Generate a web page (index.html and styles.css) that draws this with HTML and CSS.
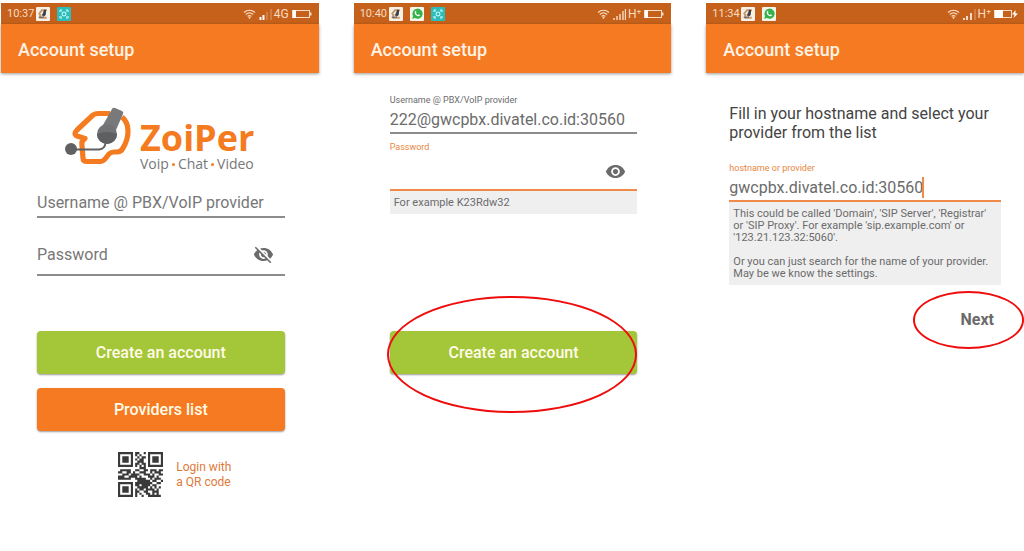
FILE: index.html
```
<!DOCTYPE html>
<html lang="en">
<head>
<meta charset="utf-8">
<title>Account setup</title>
<link rel="stylesheet" href="styles.css">
</head>
<body>
<svg class="defs" aria-hidden="true">
  <symbol id="zoiper-app" viewBox="0 0 13 13"><rect width="13" height="13" rx="1" fill="#f7f1e8"/><path d="M5 2h5v2H6L4 6l1 1v2h5v2H3V8L2 6z" fill="#c99a70"/><path d="M7.500 2.500h2l-.5 5-2 1.500-1.500-1.500 1-2z" fill="#3c4148"/><path d="M2.500 9.500H7" stroke="#56606a"/></symbol>
  <symbol id="whatsapp" viewBox="0 0 13 13"><rect width="13" height="13" rx="1" fill="#f4f6ee"/><path d="M2 11l.8-2.700a4.700 4.700 0 1 1 1.900 2z" fill="#35b24a"/><path d="M4.500 4.200c.7-1 1.200-.4 1.500.7l-.5.6c.4.9 1 1.500 1.900 1.900l.7-.6c1.200.5 1.500.9.7 1.500C6.600 9.400 3.700 6.500 4.500 4.200z" fill="#fff"/></symbol>
  <symbol id="scan" viewBox="0 0 14 14"><rect width="14" height="14" rx="1" fill="#2cbcb9"/><path d="M3 5V3h2M9 3h2v2M11 9v2H9M5 11H3V9M4.500 4.500l1 1M9.500 4.500l-1 1M4.500 9.500l1-1M9.500 9.500l-1-1" fill="none" stroke="#d9ffff"/><circle cx="7" cy="7" r="2" fill="none" stroke="#d9ffff"/></symbol>
  <symbol id="wifi" viewBox="0 0 13 10"><path d="M1 3.500c3.300-3 7.700-3 11 0M2.800 5.500c2.200-2 5.200-2 7.400 0M4.600 7.400c1.200-1 2.600-1 3.800 0" fill="none" stroke="#f8dcc4" stroke-width="1.200"/><circle cx="6.500" cy="8.800" r="1" fill="#f8dcc4"/></symbol>
  <symbol id="battery" viewBox="0 0 21 10"><rect x=".5" y="1.500" width="17" height="7" fill="none" stroke="#f8dcc4"/><path d="M18 3.500h1.500v3H18" fill="#f8dcc4"/><path d="M1 1h3v8H1z" fill="#fff"/></symbol>
  <symbol id="charging" viewBox="0 0 24 10"><rect x=".5" y="1.500" width="17" height="7" fill="none" stroke="#f8dcc4"/><path d="M1 1h8v8H1z" fill="#fff"/><path d="M21.500 1 18 5.500h2.500L19.500 9 24 4.500h-2.500z" fill="#fff"/></symbol>
</svg>
<main class="phones">
  <section class="phone">
    <div class="status">
      <span class="time">10:37</span>
      <svg class="app"><use href="#zoiper-app"/></svg>
      <svg class="app"><use href="#scan"/></svg>
      <span class="signal">
        <svg class="wifi"><use href="#wifi"/></svg>
        <svg class="bars" viewBox="0 0 13 12"><path d="M1.500 12V9M4.500 12V7" stroke="#fff" stroke-width="2"/><path d="M8 12V4M12 12V1" stroke="#e0a06c"/></svg>
        <span class="net">4G</span>
        <svg class="battery"><use href="#battery"/></svg>
      </span>
    </div>
    <h1 class="appbar">Account setup</h1>
    <form class="body">
      <div class="logo">
        <svg class="head" viewBox="0 0 66 60" role="img" aria-label="Zoiper headset">
          <path d="M45 6.500H33Q30 6.500 28 8L12 23Q8 27 12 29L20 31.500Q16 34 17 39L18 51Q18 54.500 22 54.500H35Q38 54.500 40 52L44 47Q46 45 49 45H52Q56 45 58 41 63 33 63 24 63 15 57 10" fill="none" stroke="#f47b20" stroke-width="5.200" stroke-linejoin="round"/>
          <path d="M50 1 57 4Q59 5 58 7L51 23 38 18 47 2Q48 0 50 1z" fill="#77797b"/>
          <circle cx="42" cy="27" r="10" fill="#717375"/>
          <path d="M32 27Q42 23 52 27A10 10 0 0 1 32 27z" fill="#5d5f61"/>
          <path d="M6 42.500H34Q40 42 40.500 36" fill="none" stroke="#5f6163" stroke-width="2"/>
          <circle cx="6" cy="42" r="6" fill="#5f6163"/>
        </svg>
        <div class="wordmark"><span class="brand">ZoiPer</span><span class="tagline">Voip<i></i>Chat<i></i>Video</span></div>
      </div>
      <input class="line user" type="text" placeholder="Username @ PBX/VoIP provider" aria-label="Username @ PBX/VoIP provider">
      <div class="line secret">
        <input class="bare" type="password" placeholder="Password" aria-label="Password">
        <button class="eye" type="button" aria-label="Show password"><svg viewBox="0 0 24 24"><path d="M12 7c2.760 0 5 2.240 5 5 0 .65-.13 1.260-.36 1.830l2.920 2.920c1.510-1.260 2.700-2.890 3.430-4.750-1.730-4.390-6-7.500-11-7.500-1.400 0-2.740.25-3.980.7l2.160 2.160C10.740 7.130 11.350 7 12 7zM2 4.270l2.280 2.280.46.46C3.080 8.300 1.780 10.020 1 12c1.730 4.390 6 7.500 11 7.500 1.550 0 3.030-.3 4.380-.84l.42.42L19.730 22 21 20.730 3.270 3 2 4.270zM7.530 9.800l1.550 1.550c-.05.21-.08.43-.08.65 0 1.660 1.340 3 3 3 .22 0 .44-.03.65-.08l1.550 1.550c-.67.33-1.410.53-2.200.53-2.760 0-5-2.240-5-5 0-.79.2-1.530.53-2.200zm4.310-.78l3.150 3.150.02-.16c0-1.660-1.340-3-3-3l-.17.01z"/></svg></button>
      </div>
      <button class="btn create first" type="button">Create an account</button>
      <button class="btn providers" type="button">Providers list</button>
      <a class="qr" href="#qr">
        <svg class="code" viewBox="0 0 21 21" aria-hidden="true">
          <path d="M.5.500h6v6h-6zM14.500.500h6v6h-6zM.5 14.500h6v6h-6z" fill="none" stroke="#3a3a3a"/>
          <path d="M2 2h3v3H2zM16 2h3v3h-3zM2 16h3v3H2z" fill="#3a3a3a"/>
          <path d="M8 .5h2M12 .5h1M8 1.500h1M10 1.500h1M9 2.500h1M11 2.500h2M8 3.500h1M10 3.500h2M9 4.500h3M8 5.500h2M11 5.500h2M8 6.500h1M10 6.500h1M12 6.500h1M10 7.500h3M1 8.500h5M8 8.500h2M12 8.500h2M15 8.500h3M19 8.500h2M0 9.500h2M4 9.500h2M7 9.500h1M10 9.500h3M15 9.500h1M17 9.500h3M2 10.500h3M6 10.500h4M12 10.500h3M16 10.500h1M19 10.500h2M0 11.500h3M5 11.500h4M10 11.500h1M14 11.500h3M18 11.500h1M0 12.500h6M8 12.500h5M15 12.500h1M17 12.500h3M9 13.500h6M16 13.500h2M20 13.500h1M8 14.500h8M18 14.500h2M8 15.500h2M11 15.500h4M16 15.500h2M9 16.500h5M15 16.500h1M17 16.500h1M19 16.500h1M8 17.500h1M10 17.500h2M13 17.500h4M18 17.500h1M8 18.500h2M12 18.500h2M16 18.500h3M8 19.500h1M10 19.500h1M13 19.500h2M16 19.500h1M18 19.500h1M8 20.500h1M11 20.500h1M14 20.500h6" stroke="#3a3a3a" stroke-width="1"/>
        </svg>
        <span>Login with<br>a QR code</span>
      </a>
    </form>
  </section>

  <section class="phone">
    <div class="status">
      <span class="time">10:40</span>
      <svg class="app"><use href="#zoiper-app"/></svg>
      <svg class="app"><use href="#whatsapp"/></svg>
      <svg class="app"><use href="#scan"/></svg>
      <span class="signal">
        <svg class="wifi"><use href="#wifi"/></svg>
        <svg class="bars" viewBox="0 0 13 12"><path d="M1 12v-2M4 12V8M7 12V6M10 12V3M12.500 12V1" stroke="#f8dcc4" stroke-width="1.400"/></svg>
        <span class="net">H⁺</span>
        <svg class="battery"><use href="#battery"/></svg>
      </span>
    </div>
    <h1 class="appbar">Account setup</h1>
    <form class="body">
      <label class="caption top" for="user">Username @ PBX/VoIP provider</label>
      <input class="line filled" id="user" type="text" value="222@gwcpbx.divatel.co.id:30560">
      <label class="caption accent" for="pass">Password</label>
      <div class="line secret active">
        <input class="bare" id="pass" type="password">
        <button class="eye" type="button" aria-label="Hide password"><svg viewBox="0 0 24 24"><path d="M12 4.500C7 4.500 2.730 7.610 1 12c1.730 4.390 6 7.500 11 7.500s9.270-3.110 11-7.500c-1.730-4.390-6-7.500-11-7.500zM12 17c-2.760 0-5-2.240-5-5s2.240-5 5-5 5 2.240 5 5-2.240 5-5 5zm0-8c-1.660 0-3 1.340-3 3s1.340 3 3 3 3-1.340 3-3-1.340-3-3-3z"/></svg></button>
      </div>
      <p class="hint">For example K23Rdw32</p>
      <div class="marked create-mark">
        <button class="btn create" type="button">Create an account</button>
      </div>
    </form>
  </section>

  <section class="phone">
    <div class="status">
      <span class="time">11:34</span>
      <svg class="app"><use href="#zoiper-app"/></svg>
      <svg class="app"><use href="#whatsapp"/></svg>
      <span class="signal">
        <svg class="wifi"><use href="#wifi"/></svg>
        <svg class="bars" viewBox="0 0 13 12"><path d="M1 12v-2M4 12V8M8 12V5" stroke="#fff" stroke-width="1.500"/><path d="M12 12V1" stroke="#e0a06c"/></svg>
        <span class="net">H⁺</span>
        <svg class="battery charging"><use href="#charging"/></svg>
      </span>
    </div>
    <h1 class="appbar">Account setup</h1>
    <form class="body host">
      <p class="intro">Fill in your hostname and select your provider from the list</p>
      <label class="caption accent" for="host">hostname or provider</label>
      <div class="line active hostline"><input class="bare" id="host" type="text" value="gwcpbx.divatel.co.id:30560"><span class="caret"></span></div>
      <div class="hint">
        <p>This could be called 'Domain', 'SIP Server', 'Registrar' or 'SIP Proxy'. For example 'sip.example.com' or '123.21.123.32:5060'.</p>
        <p>Or you can just search for the name of your provider. May be we know the settings.</p>
      </div>
      <div class="marked next-mark"><button class="next" type="button">Next</button></div>
    </form>
  </section>
</main>
</body>
</html>
```
FILE: styles.css
```
* { box-sizing: border-box; }
body { margin: 0; background: #fff; color: #6b6b6b; font-family: Roboto, "Liberation Sans", sans-serif; overflow-x: hidden; }
h1, p { margin: 0; font-weight: 400; }
input, button { font: inherit; color: inherit; border: 0; margin: 0; padding: 0; background: none; border-radius: 0; outline: 0; }
.defs { display: none; }
.phones { display: grid; grid-template-columns: repeat(3, 1fr); gap: 35px; padding: 3px 0 0 1px; }
.phone { min-width: 0; }

.status { display: flex; align-items: center; height: 21px; padding: 0 6px; background: #c5611a; color: #f8dcc4; font-size: 11px; }
.time { width: 29px; }
.app { width: 14px; height: 14px; margin-right: 7px; }
.signal { display: flex; align-items: center; margin-left: auto; gap: 2px; }
.wifi { width: 13px; height: 10px; margin-right: 1px; }
.bars { width: 13px; height: 12px; }
.net { font-size: 12px; }
.battery { width: 21px; height: 10px; margin-left: 1px; }
.battery.charging { width: 24px; }

.appbar { display: flex; align-items: center; height: 49px; padding: 2px 17px 0; background: #f67a21; color: #fff3e6; font-size: 18px; font-weight: 500; box-shadow: 0 1px 3px #0006; }
.body { display: flex; flex-direction: column; padding: 0 34px 0 36px; }

.logo { display: flex; margin: 34px 0 0 28px; gap: 9px; height: 66px; }
.head { flex: none; width: 66px; height: 60px; }
.wordmark { display: flex; flex-direction: column; padding-top: 11px; }
.brand { color: #f47b20; font: 700 36px/40px "Open Sans", sans-serif; }
.tagline { display: flex; align-items: center; gap: 3px; color: #77787a; font: 14px/12px "Open Sans", sans-serif; white-space: nowrap; }
.tagline i { width: 3px; height: 3px; border-radius: 50%; background: #f47b20; }

.line { width: 100%; border-bottom: 2px solid #8c8c8c; font-size: 16px; }
.line.active { border-color: #ef8a49; }
.bare { flex: 1; min-width: 0; }
input::placeholder { color: #777; opacity: 1; }
.user { height: 30px; margin-top: 15px; }
.secret { display: flex; align-items: center; height: 42px; margin-top: 16px; padding-right: 11px; }
.eye { display: flex; }
.eye svg { width: 21px; height: 21px; fill: #6b6b6b; }

.btn { width: 100%; height: 43px; border-radius: 4px; color: #fffbe8; font-size: 16px; font-weight: 500; box-shadow: 0 1px 2px #0006; }
.create { background: #a4c639; }
.providers { margin-top: 14px; background: #f67a21; }
.first { margin-top: 55px; }
.qr { display: flex; align-items: center; align-self: center; gap: 13px; margin: 21px 0 0 28px; color: #dd7a3a; font-size: 12px; line-height: 15px; text-decoration: none; }
.code { width: 45px; height: 45px; }

.caption { font-size: 9px; line-height: 12px; }
.caption.top { margin-top: 21px; }
.accent { color: #e8863f; }
.line.filled { height: 28px; }
.line.filled + .caption { margin-top: 7px; }
.caption + .secret { margin-top: 0; height: 38px; }
.hint { padding: 6px 4px 5px; background: #efefef; font-size: 11px; line-height: 12px; }
.marked { position: relative; }
.marked::after { content: ""; position: absolute; border: 2px solid #ee0c0c; border-radius: 50%; pointer-events: none; }
.create-mark { margin-top: 117px; }
.create-mark::after { inset: -35px 0 -39px -3px; }

.host { padding: 0 23px; }
.intro { margin-top: 31px; color: #444; font-size: 16px; line-height: 19px; }
.host .caption { margin-top: 20px; }
.hostline { display: flex; align-items: center; height: 28px; }
.hostline .bare { flex: none; width: 193px; }
.caret { width: 2px; height: 21px; background: #ef8a49; }
.hint p + p { margin-top: 12px; }
.next-mark { align-self: flex-end; margin: 24px 7px 0 0; }
.next-mark::after { inset: -18px -30px -18px -48px; }
.next { display: block; font-size: 16px; line-height: 22px; font-weight: 700; }
```
